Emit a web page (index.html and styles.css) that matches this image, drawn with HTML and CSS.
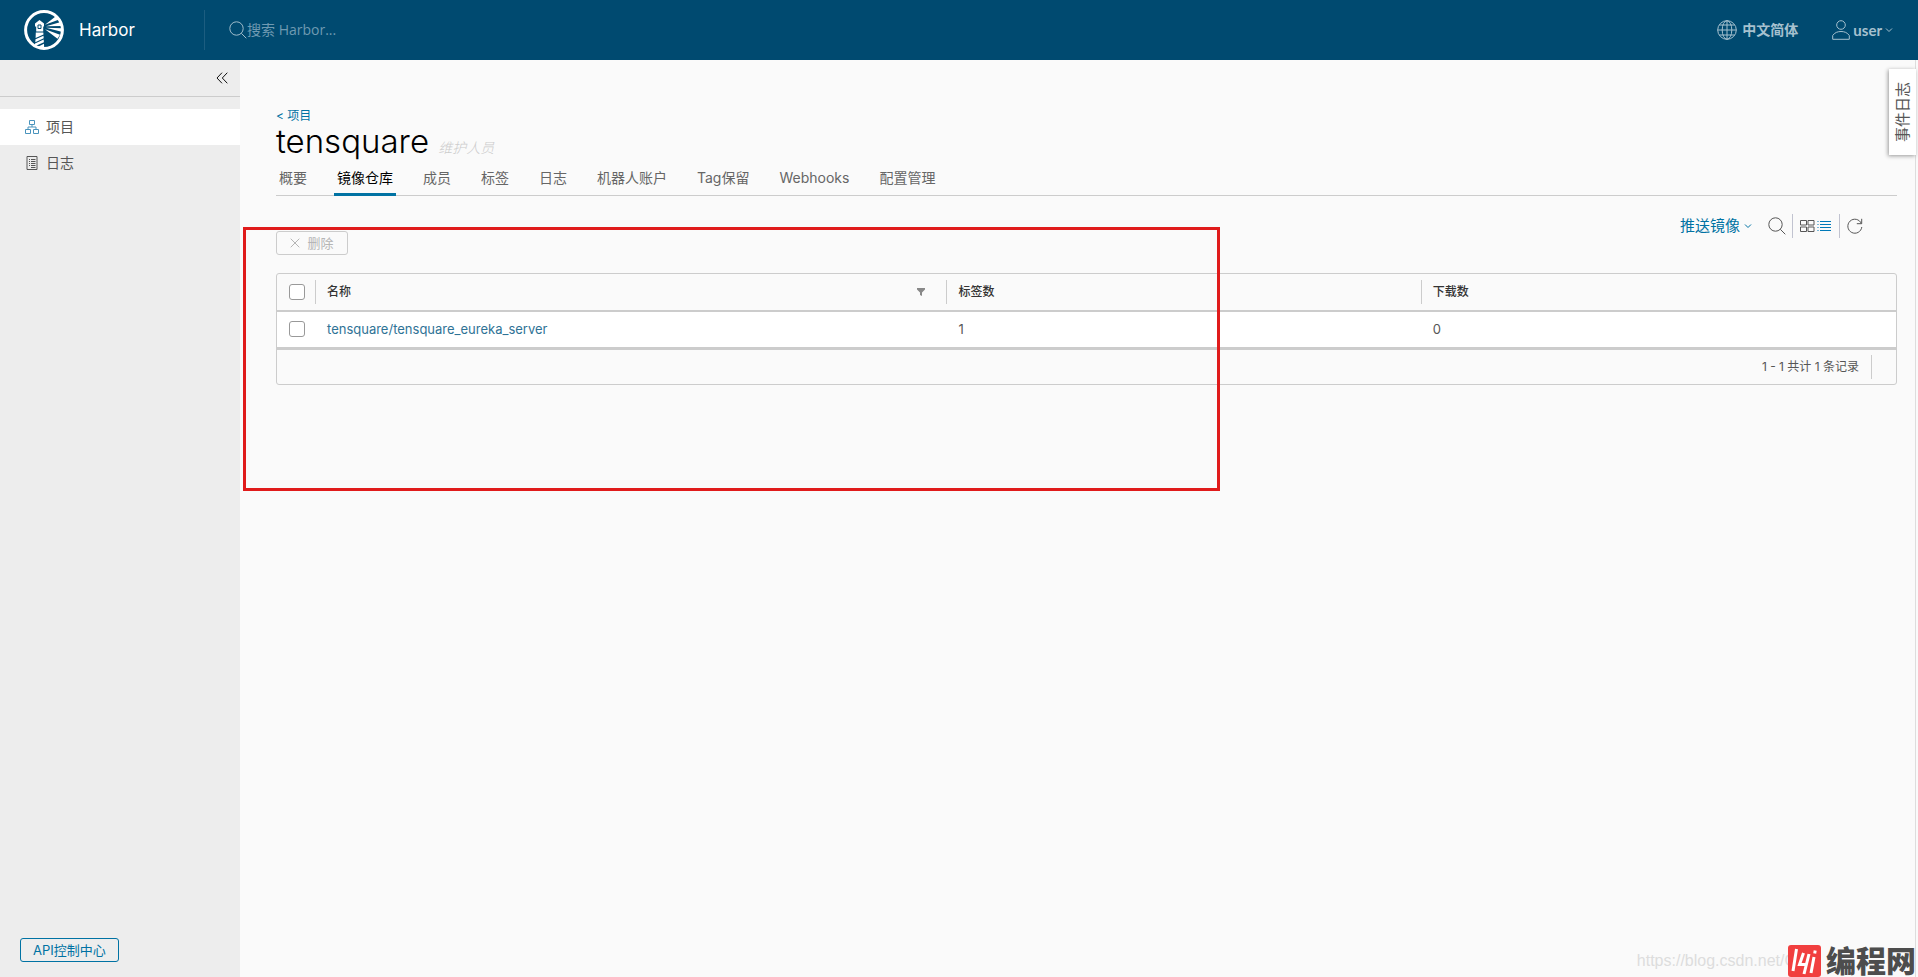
FILE: index.html
```html
<!DOCTYPE html>
<html lang="zh-CN">
<head>
<meta charset="utf-8">
<title>Harbor</title>
<link rel="stylesheet" href="styles.css">
</head>
<body>
<div class="app">
  <header class="header">
    <a class="brand" href="#">
      <svg class="brand-logo" viewBox="0 0 40 40" aria-hidden="true">
        <circle cx="20" cy="20" r="18.4" fill="none" stroke="#fff" stroke-width="3"/>
        <path fill="#fff" d="M11 16.500v-3l4.500-3.500 4.500 3.500v3h-.8v5h-7v-5zM11.800 22.500h7.500l.2 2-7.900 3.500zM11.500 29.300l8-3.600.2 2.500-8.400 4zM11 33.500l8.700-4 .2 2.700-9 4zM13 37.200l7-3.400.2 4.700z"/>
        <path fill="none" stroke="#004a70" stroke-width="1" d="M14 15h3v3.500h-3z"/>
        <path fill="#fff" d="M21 14.800l10.500-8.300 3 3.200zM22 16.300l14-4 1.500 3.700zM22 17.800l15.500.4v3.500zM21 19.300l15 5.500-2.500 4z"/>
      </svg>
      <span class="brand-name">Harbor</span>
    </a>
    <label class="search">
      <svg class="search-icon" viewBox="0 0 18 18" aria-hidden="true"><circle cx="7.500" cy="7.500" r="6.700"/><path d="M12.300 12.300l5 5"/></svg>
      <input class="search-input" type="text" placeholder="搜索 Harbor..." aria-label="搜索 Harbor">
    </label>
    <nav class="header-actions">
      <button class="header-button language" type="button">
        <svg class="globe-icon" viewBox="0 0 20 20" aria-hidden="true"><circle cx="10" cy="10" r="9.300"/><ellipse cx="10" cy="10" rx="4.800" ry="9.300"/><path d="M10 .7v18.600M.7 10h18.600M2.500 5h15M2.500 15h15"/></svg>
        中文简体
      </button>
      <button class="header-button account" type="button">
        <svg class="user-icon" viewBox="0 0 18 20" aria-hidden="true"><circle cx="9" cy="5" r="4.300"/><path d="M.7 19.300v-3.800c2-3 5-4 8.300-4s6.300 1 8.300 4v3.800z"/></svg>
        user
        <svg class="caret" viewBox="0 0 8 6" aria-hidden="true"><path d="M1 1.500l3 3 3-3"/></svg>
      </button>
    </nav>
  </header>

  <div class="body">
    <aside class="sidebar">
      <div class="sidebar-top">
        <button class="collapse" type="button" aria-label="收起">
          <svg class="collapse-icon" viewBox="0 0 12 12" aria-hidden="true"><path d="M6 .7L1 6l5 5.300M11.300.7l-5 5.300 5 5.300"/></svg>
        </button>
      </div>
      <nav class="side-nav">
        <a class="side-link side-link-active" href="#">
          <svg class="side-icon side-icon-blue" viewBox="0 0 14 14" aria-hidden="true"><path d="M4.500.5h5v4h-5zM.5 9.500h5v4h-5zM8.500 9.500h5v4h-5zM7 4.500v2.500M3 9.500V7h8v2.500"/></svg>
          项目
        </a>
        <a class="side-link" href="#">
          <svg class="side-icon" viewBox="0 0 14 14" aria-hidden="true"><path d="M2 .5h10v13H2zM4 3.500h1M6 3.500h4.500M4 5.500h1M6 5.500h4.500M4 7.500h1M6 7.500h4.500M4 9.500h1M6 9.500h4.500M6 11.500h4.500"/></svg>
          日志
        </a>
      </nav>
      <a class="api-button" href="#">API控制中心</a>
    </aside>

    <main class="content">
      <a class="back" href="#">&lt; 项目</a>
      <h1 class="title">tensquare <span class="role">维护人员</span></h1>
      <nav class="tabs">
        <a class="tab" href="#">概要</a>
        <a class="tab tab-active" href="#">镜像仓库</a>
        <a class="tab" href="#">成员</a>
        <a class="tab" href="#">标签</a>
        <a class="tab" href="#">日志</a>
        <a class="tab" href="#">机器人账户</a>
        <a class="tab" href="#">Tag保留</a>
        <a class="tab" href="#">Webhooks</a>
        <a class="tab" href="#">配置管理</a>
      </nav>

      <div class="toolbar">
        <button class="push" type="button">推送镜像 <svg class="caret" viewBox="0 0 8 6" aria-hidden="true"><path d="M1 1.500l3 3 3-3"/></svg></button>
        <button class="tool tool-search" type="button" aria-label="搜索"><svg class="search-icon" viewBox="0 0 18 18" aria-hidden="true"><circle cx="7.500" cy="7.500" r="6.700"/><path d="M12.300 12.300l5 5"/></svg></button>
        <div class="view-switch">
          <button class="tool" type="button" aria-label="卡片视图"><svg class="view-icon" viewBox="0 0 15 12" aria-hidden="true"><path d="M.5.5h6v4.500h-6zM8 .5h6v4.500h-6zM.5 7h6v4.500h-6zM8 7h6v4.500h-6z"/></svg></button>
          <button class="tool tool-active" type="button" aria-label="列表视图"><svg class="view-icon" viewBox="0 0 15 12" aria-hidden="true"><path d="M.5 1.500h1M3 1.500h11M.5 4.500h1M3 4.500h11M.5 7.500h1M3 7.500h11M.5 10.500h1M3 10.500h11"/></svg></button>
        </div>
        <button class="tool" type="button" aria-label="刷新"><svg class="refresh-icon" viewBox="0 0 16 16" aria-hidden="true"><path d="M14.300 5.500A7 7 0 1 0 14.800 9M14.700.8v4.900h-4.900"/></svg></button>
      </div>

      <button class="delete" type="button" disabled><svg class="cross" viewBox="0 0 10 10" aria-hidden="true"><path d="M.7.7l8.600 8.600M9.300.7L.7 9.300"/></svg>删除</button>

      <div class="grid">
        <table class="table">
          <colgroup><col class="col-check"><col class="col-name"><col class="col-tags"><col></colgroup>
          <thead>
            <tr>
              <th><input class="check" type="checkbox" aria-label="全选"></th>
              <th><div class="head-cell">名称 <svg class="filter" viewBox="0 0 8 8" aria-hidden="true"><path d="M0 0h8v1.500L5 4.500V8L3 7V4.500L0 1.500z"/></svg></div></th>
              <th><div class="head-cell">标签数</div></th>
              <th><div class="head-cell">下载数</div></th>
            </tr>
          </thead>
          <tbody>
            <tr>
              <td><input class="check" type="checkbox" aria-label="选择 tensquare/tensquare_eureka_server"></td>
              <td><a class="repo" href="#">tensquare/tensquare_eureka_server</a></td>
              <td>1</td>
              <td>0</td>
            </tr>
          </tbody>
        </table>
        <div class="grid-footer"><span class="count">1 - 1 共计 1 条记录</span></div>
      </div>
      <div class="highlight"></div>
    </main>
  </div>

  <button class="event-log" type="button">事件日志</button>
  <div class="watermark">
    <span class="watermark-url">https://blog.csdn.net/C</span>
    <svg class="watermark-logo" viewBox="0 0 33 32" aria-hidden="true"><rect width="33" height="32" rx="3" fill="#f13f3f"/><path d="M8.500 4L5 26M15.500 8l-4 11.500h6.500M21 9l-5 20M26 12l-3 16M27.200 5.500l-.5 3" fill="none" stroke="#fff" stroke-width="3"/></svg>
    <span class="watermark-name">编程网</span>
  </div>
</div>
</body>
</html>
```
FILE: styles.css
```css
* { box-sizing: border-box; }
body {
  margin: 0;
  font: 13px/24px Inter, "Noto Sans CJK SC", sans-serif;
  color: #565656;
  background: #fafafa;
}
a { color: inherit; text-decoration: none; }
button { font: inherit; color: inherit; background: none; border: 0; padding: 0; }
svg { display: block; flex: none; fill: none; stroke: currentColor; overflow: visible; }

.app { position: relative; display: flex; flex-direction: column; height: 100vh; overflow: hidden; }

.header { display: flex; align-items: center; height: 60px; flex: none; background: #004a70; color: #fff; }
.brand { display: flex; align-items: center; gap: 15px; width: 204px; padding-left: 24px; }
.brand-logo { width: 40px; height: 40px; stroke: none; }
.brand-name { font-size: 17px; }
.search { display: flex; align-items: center; flex: 1; height: 40px; padding-left: 24px; border-left: 1px solid #1c5d80; color: #9fbccb; }
.search-icon { width: 18px; height: 18px; }
.search-input { width: 300px; padding: 0; border: 0; outline: 0; background: none; color: #fff; font: 14px/24px "Open Sans", "Noto Sans CJK SC", sans-serif; }
.search-input::placeholder { color: #6f9ab2; opacity: 1; }
.header-actions { display: flex; gap: 34px; padding-right: 25px; color: #a6c1cf; }
.header-button { display: flex; align-items: center; font: 700 14px/24px Lato, "Noto Sans CJK SC", sans-serif; }
.language { gap: 5px; }
.account { gap: 3px; font-size: 15px; }
.globe-icon { width: 20px; height: 20px; }
.user-icon { width: 18px; height: 20px; }
.caret { width: 8px; height: 6px; }

.body { display: flex; flex: 1; min-height: 0; }
.sidebar { display: flex; flex-direction: column; width: 240px; flex: none; background: #ededed; }
.sidebar-top { display: flex; justify-content: flex-end; align-items: center; height: 37px; padding-right: 12px; border-bottom: 1px solid #ccc; color: #111; }
.collapse-icon { width: 12px; height: 12px; }
.side-nav { flex: 1; padding-top: 12px; font-size: 14px; }
.side-link { display: flex; align-items: center; gap: 7px; height: 36px; padding-left: 25px; }
.side-link-active { background: #fff; }
.side-icon { width: 14px; height: 14px; }
.side-icon-blue { color: #4a94bd; }
.api-button { align-self: flex-start; margin: 0 0 15px 20px; padding: 0 12px; border: 1px solid #0072a3; border-radius: 3px; line-height: 22px; color: #0072a3; }

.content { position: relative; flex: 1; min-width: 0; padding: 44px 18px 0 36px; margin-right: 2px; border-right: 1px solid #ddd; }
.back { display: block; font-size: 12px; color: #0072a3; }
.title { margin: 0; font-size: 33px; line-height: 26px; font-weight: 300; color: #000; }
.role { font-size: 14px; font-style: italic; color: #ccc; }
.tabs { display: flex; gap: 24px; height: 41px; margin-top: -6px; border-bottom: 1px solid #ccc; font-size: 14px; line-height: 46px; color: #666; }
.tab { height: 41px; padding: 0 3px; }
.tab-active { color: #000; border-bottom: 3px solid #0072a3; }

.toolbar { display: flex; justify-content: flex-end; align-items: center; height: 24px; margin-top: 18px; padding-right: 34px; }
.push { display: flex; align-items: center; gap: 4px; font-size: 15px; color: #0072a3; }
.tool { display: flex; }
.tool-search { margin: 0 6px 0 16px; }
.view-switch { display: flex; gap: 2px; align-items: center; height: 24px; padding: 0 7px; margin-right: 7px; border: solid #c1c3d0; border-width: 0 1px; }
.view-icon { width: 15px; height: 12px; }
.tool-active { color: #0079b8; }
.refresh-icon { width: 16px; height: 16px; }

.delete { display: flex; align-items: center; justify-content: center; gap: 7px; width: 72px; height: 24px; margin-top: -7px; border: 1px solid #ccc; border-radius: 3px; color: #b5b5b5; }
.cross { width: 10px; height: 10px; }

.grid { margin-top: 18px; border: 1px solid #ccc; border-radius: 3px; }
.table { width: 100%; table-layout: fixed; border-collapse: collapse; color: #565656; }
.col-check { width: 38px; }
.col-name { width: 39%; }
.col-tags { width: 29.3%; }
th { height: 37px; padding: 0; border-bottom: 2px solid #ccc; font-size: 12px; font-weight: 500; text-align: left; color: #333; }
td { height: 37px; padding: 0 0 0 12px; background: #fff; border-bottom: 3px solid #ccc; }
th:first-child, td:first-child { padding: 0 0 0 12px; }
.head-cell { display: flex; align-items: center; justify-content: space-between; height: 24px; padding: 0 21px 0 11px; border-left: 1px solid #ccc; }
.filter { width: 8px; height: 8px; fill: #888; stroke: none; }
.check { display: block; appearance: none; width: 16px; height: 16px; margin: 0; border: 1px solid #999; border-radius: 3px; background: #fff; }
.repo { color: #2f7396; }
.grid-footer { display: flex; justify-content: flex-end; align-items: center; height: 34px; padding-right: 24px; font-size: 12px; }
.count { padding-right: 12px; border-right: 1px solid #ccc; }

.highlight { position: absolute; top: 167px; left: 3px; width: 977px; height: 264px; border: 3px solid #e01b1b; pointer-events: none; }
.event-log { position: absolute; top: 69px; right: 2px; width: 27px; height: 86px; background: #fff; box-shadow: 1px -1px 4px #999; font-size: 15px; line-height: 27px; writing-mode: vertical-rl; text-orientation: sideways; transform: rotate(180deg); }
.watermark { position: absolute; right: 2px; bottom: 0; display: flex; align-items: center; height: 32px; }
.watermark-url { margin-right: -8px; font: 16px/24px "Liberation Sans", sans-serif; color: #ddd; }
.watermark-logo { position: relative; width: 33px; height: 32px; margin-right: 5px; stroke: none; }
.watermark-name { padding-bottom: 4px; font: 900 30px/28px "Noto Sans CJK SC", sans-serif; color: #4d4d4d; }
```
